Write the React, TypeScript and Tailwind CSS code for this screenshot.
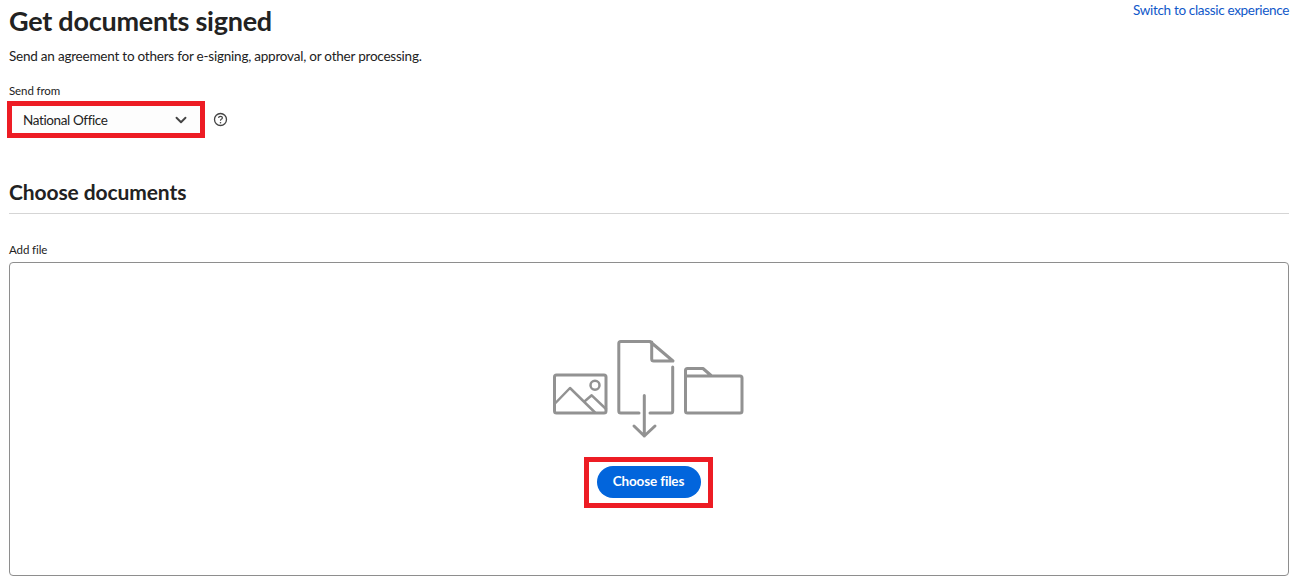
import { ChevronDown } from "lucide-react";

function UploadArt() {
  return (
    <svg width="194" height="100" viewBox="0 0 194 100" fill="none" stroke="#929292" strokeWidth="3" strokeLinejoin="round" strokeLinecap="round">
      {/* picture */}
      <rect x="2.5" y="36" width="51.5" height="38" rx="2" />
      <circle cx="43" cy="46.3" r="4.5" strokeWidth="2.5" />
      <path d="M3.5 64 L18 49 L43 73.5" strokeWidth="2.5" />
      <path d="M33 62 L39.7 56.3 L54 70" strokeWidth="2.5" />
      {/* document */}
      <path d="M87 74 H68.8 Q66.8 74 66.8 72 V4.5 Q66.8 2.5 68.8 2.5 H98 L121 22 H101.7 Q99.7 22 99.7 20 V3" />
      <path d="M120.7 28 V72 Q120.7 74 118.7 74 H98" />
      <path d="M92.3 56.5 V97 M82 87 L92.3 97 L103 87" />
      {/* folder */}
      <path d="M133.5 37 V31.5 Q133.5 29.5 135.5 29.5 H151 L159.7 37 H188 Q190 37 190 39 V72 Q190 74 188 74 H135.5 Q133.5 74 133.5 72 V37 H159" />
    </svg>
  );
}

export default function App() {
  return (
    <div className="h-[580px] w-[1299px] overflow-hidden bg-white font-['Lato','Open_Sans',sans-serif] text-[#222222]">
      <div className="flex flex-col pl-[9px] pr-[10px]">
        {/* Header */}
        <div className="flex h-[45px] items-start justify-between">
          <h1 className="text-[27px] font-bold leading-[42px] tracking-[-0.25px]">Get documents signed</h1>
          <a className="mt-[1px] text-[13.5px] leading-[18px] tracking-[-0.32px] text-[#1058c9]">Switch to classic experience</a>
        </div>
        <p className="mt-[1px] text-[13.5px] leading-[20px] tracking-[-0.22px]">Send an agreement to others for e-signing, approval, or other processing.</p>

        {/* Send from */}
        <div className="mt-[17px] text-[11.5px] leading-[16px] tracking-[-0.1px]">Send from</div>
        <div className="-ml-[2px] mt-[2px] flex items-center">
          <div className="flex h-[37px] w-[198px] items-center justify-between border-[5px] border-[#ed1c24] bg-[#fdfdfd] pl-[11px] pr-[10px] text-[13.5px] tracking-[-0.38px]">
            <span className="pt-[2px]">National Office</span>
            <ChevronDown size={18} strokeWidth={2.5} className="text-[#444444]" />
          </div>
          <svg className="ml-[8px]" width="15" height="15" viewBox="0 0 15 15" fill="none" stroke="#444444">
            <circle cx="7.5" cy="7.5" r="6" strokeWidth="1.3" />
            <path d="M5.6 6 Q5.6 4.3 7.5 4.3 Q9.4 4.3 9.4 5.8 Q9.4 6.8 8.3 7.3 Q7.5 7.7 7.5 8.8" strokeWidth="1.2" />
            <circle cx="7.5" cy="10.7" r="0.8" fill="#444444" stroke="none" />
          </svg>
        </div>

        {/* Choose documents */}
        <h2 className="mt-[39px] text-[21px] font-bold leading-[30px] tracking-[-0.1px]">Choose documents</h2>
        <div className="mt-[6px] h-px bg-[#d5d5d5]" />
        <div className="mt-[28px] text-[11.5px] leading-[16px] tracking-[-0.1px]">Add file</div>
        <div className="mt-[4px] flex h-[314px] flex-col items-center rounded-[4px] border border-[#8e8e8e] pt-[76px]">
          <UploadArt />
          <div className="-ml-[2px] mt-[18px] border-[5px] border-[#ed1c24] pb-[5px] pl-[8px] pr-[7px] pt-[4px]">
            <button className="h-[32px] w-[104px] rounded-full bg-[#0265dc] pb-[1px] text-[13.5px] font-bold tracking-[-0.15px] text-white">Choose files</button>
          </div>
        </div>
      </div>
    </div>
  );
}
